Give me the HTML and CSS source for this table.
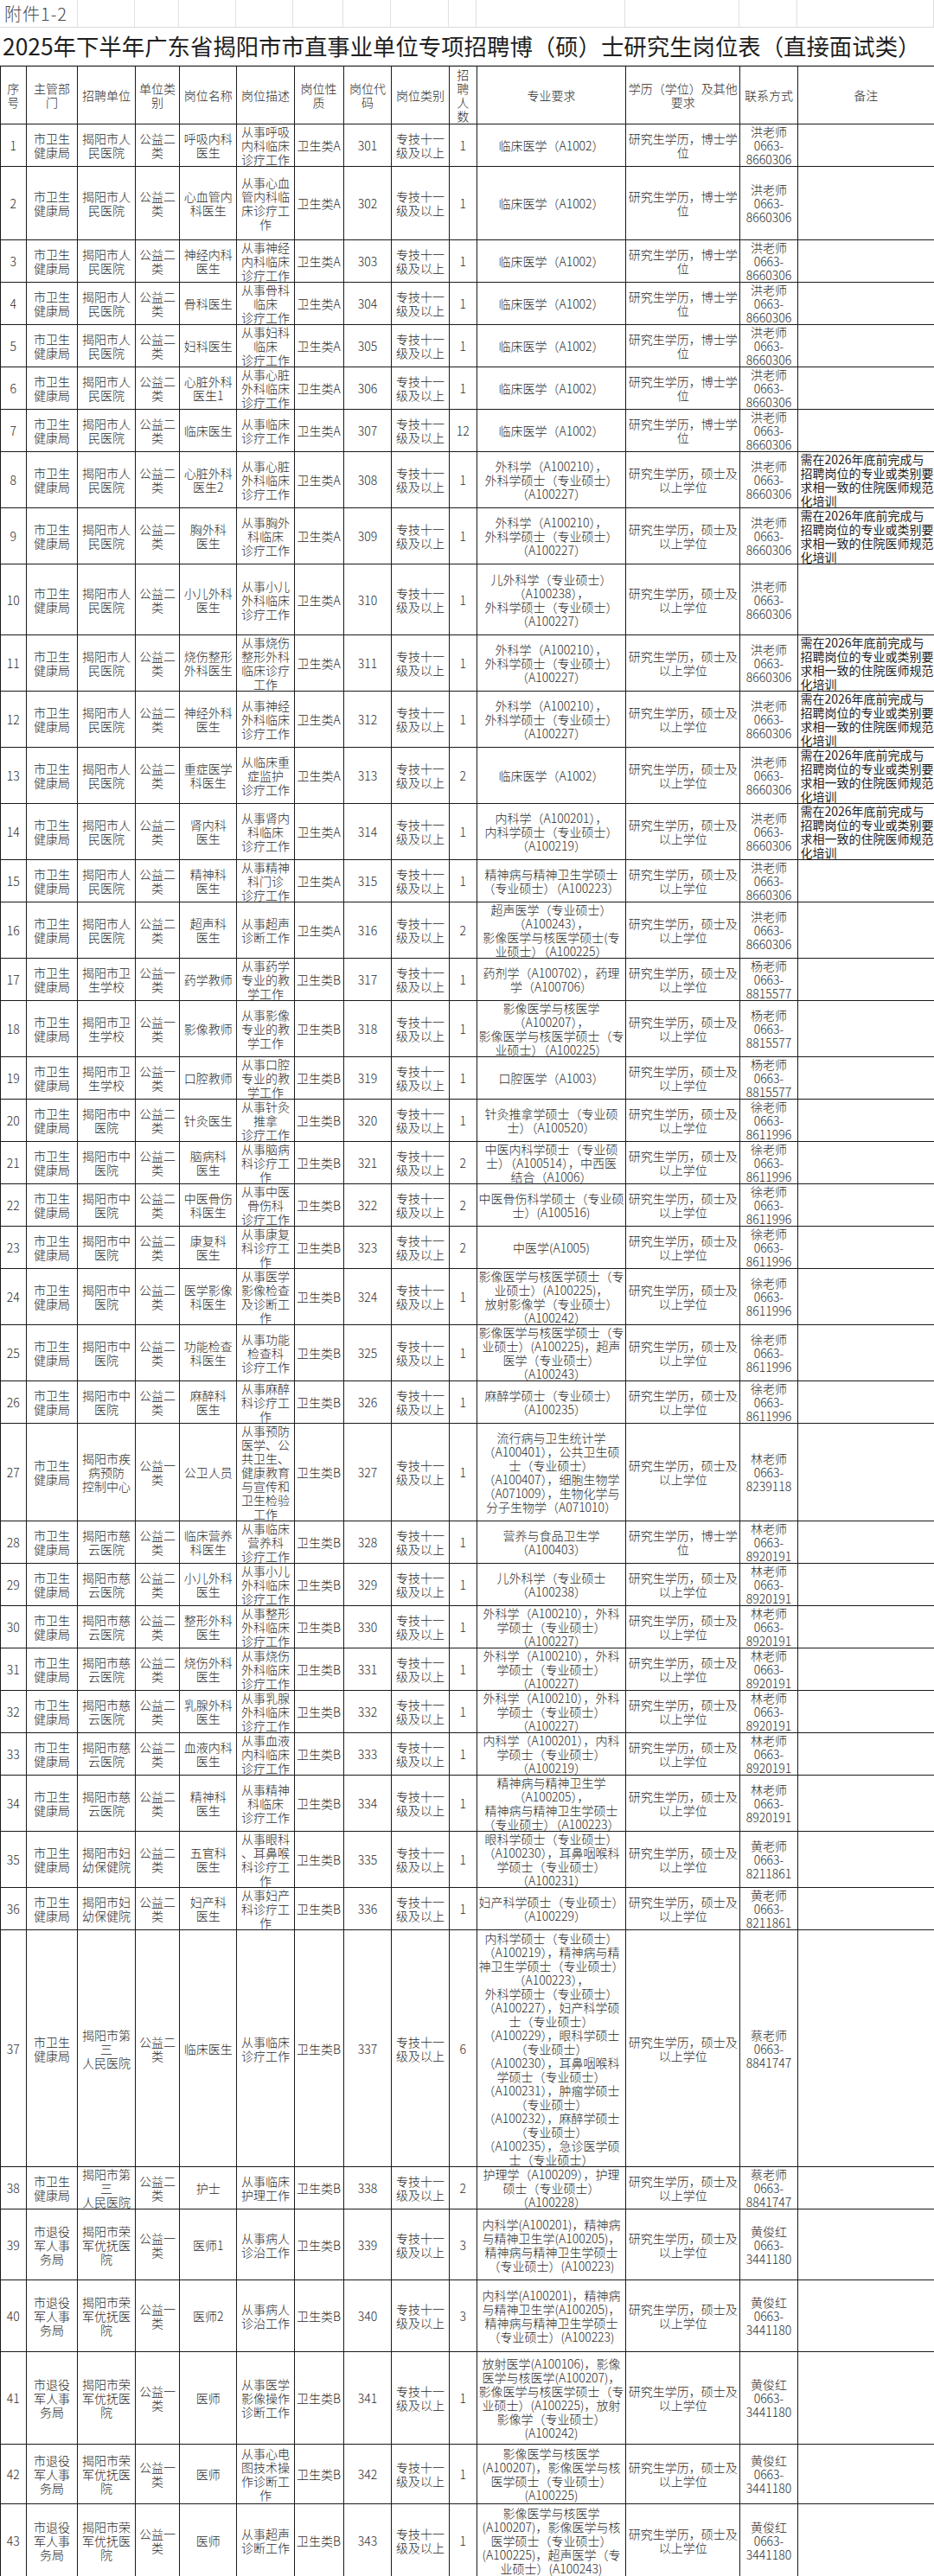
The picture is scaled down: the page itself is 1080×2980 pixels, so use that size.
FILE: index.html
```html
<!DOCTYPE html>
<html lang="zh-CN">
<head>
<meta charset="utf-8">
<title>2025年下半年广东省揭阳市市直事业单位专项招聘博（硕）士研究生岗位表（直接面试类）</title>
<link rel="stylesheet" href="styles.css">
</head>
<body>
<div class="top">
  <div class="annex">附件1-2</div>
  <div></div><div></div><div></div><div></div><div></div><div></div><div></div><div></div><div></div><div></div><div></div><div></div>
</div>
<div class="title">2025年下半年广东省揭阳市市直事业单位专项招聘博（硕）士研究生岗位表（直接面试类）</div>
<table class="jobs">
<colgroup>
<col class="c-no"><col class="c-dept"><col class="c-unit"><col class="c-utype"><col class="c-name"><col class="c-desc"><col class="c-nature"><col class="c-code"><col class="c-cat"><col class="c-num"><col class="c-major"><col class="c-edu"><col class="c-contact"><col class="c-rem">
</colgroup>
<thead>
<tr class="hd">
<th>序<br>号</th><th>主管部<br>门</th><th>招聘单位</th><th>单位类<br>别</th><th>岗位名称</th><th>岗位描述</th><th>岗位性<br>质</th><th>岗位代<br>码</th><th>岗位类别</th><th>招<br>聘<br>人<br>数</th><th>专业要求</th><th>学历（学位）及其他<br>要求</th><th>联系方式</th><th>备注</th>
</tr>
</thead>
<tbody>
<tr class="h49"><td>1</td><td>市卫生<br>健康局</td><td>揭阳市人<br>民医院</td><td>公益二<br>类</td><td>呼吸内科<br>医生</td><td>从事呼吸<br>内科临床<br>诊疗工作</td><td>卫生类A</td><td>301</td><td>专技十一<br>级及以上</td><td>1</td><td>临床医学（A1002）</td><td>研究生学历，博士学<br>位</td><td>洪老师<br>0663-<br>8660306</td><td class="rem"></td></tr>
<tr class="h86"><td>2</td><td>市卫生<br>健康局</td><td>揭阳市人<br>民医院</td><td>公益二<br>类</td><td>心血管内<br>科医生</td><td>从事心血<br>管内科临<br>床诊疗工<br>作</td><td>卫生类A</td><td>302</td><td>专技十一<br>级及以上</td><td>1</td><td>临床医学（A1002）</td><td>研究生学历，博士学<br>位</td><td>洪老师<br>0663-<br>8660306</td><td class="rem"></td></tr>
<tr class="h49"><td>3</td><td>市卫生<br>健康局</td><td>揭阳市人<br>民医院</td><td>公益二<br>类</td><td>神经内科<br>医生</td><td>从事神经<br>内科临床<br>诊疗工作</td><td>卫生类A</td><td>303</td><td>专技十一<br>级及以上</td><td>1</td><td>临床医学（A1002）</td><td>研究生学历，博士学<br>位</td><td>洪老师<br>0663-<br>8660306</td><td class="rem"></td></tr>
<tr class="h49"><td>4</td><td>市卫生<br>健康局</td><td>揭阳市人<br>民医院</td><td>公益二<br>类</td><td>骨科医生</td><td>从事骨科<br>临床<br>诊疗工作</td><td>卫生类A</td><td>304</td><td>专技十一<br>级及以上</td><td>1</td><td>临床医学（A1002）</td><td>研究生学历，博士学<br>位</td><td>洪老师<br>0663-<br>8660306</td><td class="rem"></td></tr>
<tr class="h49"><td>5</td><td>市卫生<br>健康局</td><td>揭阳市人<br>民医院</td><td>公益二<br>类</td><td>妇科医生</td><td>从事妇科<br>临床<br>诊疗工作</td><td>卫生类A</td><td>305</td><td>专技十一<br>级及以上</td><td>1</td><td>临床医学（A1002）</td><td>研究生学历，博士学<br>位</td><td>洪老师<br>0663-<br>8660306</td><td class="rem"></td></tr>
<tr class="h49"><td>6</td><td>市卫生<br>健康局</td><td>揭阳市人<br>民医院</td><td>公益二<br>类</td><td>心脏外科<br>医生1</td><td>从事心脏<br>外科临床<br>诊疗工作</td><td>卫生类A</td><td>306</td><td>专技十一<br>级及以上</td><td>1</td><td>临床医学（A1002）</td><td>研究生学历，博士学<br>位</td><td>洪老师<br>0663-<br>8660306</td><td class="rem"></td></tr>
<tr class="h49"><td>7</td><td>市卫生<br>健康局</td><td>揭阳市人<br>民医院</td><td>公益二<br>类</td><td>临床医生</td><td>从事临床<br>诊疗工作</td><td>卫生类A</td><td>307</td><td>专技十一<br>级及以上</td><td>12</td><td>临床医学（A1002）</td><td>研究生学历，博士学<br>位</td><td>洪老师<br>0663-<br>8660306</td><td class="rem"></td></tr>
<tr class="h65"><td>8</td><td>市卫生<br>健康局</td><td>揭阳市人<br>民医院</td><td>公益二<br>类</td><td>心脏外科<br>医生2</td><td>从事心脏<br>外科临床<br>诊疗工作</td><td>卫生类A</td><td>308</td><td>专技十一<br>级及以上</td><td>1</td><td>外科学（A100210），<br>外科学硕士（专业硕士）<br>（A100227）</td><td>研究生学历，硕士及<br>以上学位</td><td>洪老师<br>0663-<br>8660306</td><td class="rem">需在2026年底前完成与<br>招聘岗位的专业或类别要<br>求相一致的住院医师规范<br>化培训</td></tr>
<tr class="h65"><td>9</td><td>市卫生<br>健康局</td><td>揭阳市人<br>民医院</td><td>公益二<br>类</td><td>胸外科<br>医生</td><td>从事胸外<br>科临床<br>诊疗工作</td><td>卫生类A</td><td>309</td><td>专技十一<br>级及以上</td><td>1</td><td>外科学（A100210），<br>外科学硕士（专业硕士）<br>（A100227）</td><td>研究生学历，硕士及<br>以上学位</td><td>洪老师<br>0663-<br>8660306</td><td class="rem">需在2026年底前完成与<br>招聘岗位的专业或类别要<br>求相一致的住院医师规范<br>化培训</td></tr>
<tr class="h82"><td>10</td><td>市卫生<br>健康局</td><td>揭阳市人<br>民医院</td><td>公益二<br>类</td><td>小儿外科<br>医生</td><td>从事小儿<br>外科临床<br>诊疗工作</td><td>卫生类A</td><td>310</td><td>专技十一<br>级及以上</td><td>1</td><td>儿外科学（专业硕士）<br>（A100238），<br>外科学硕士（专业硕士）<br>（A100227）</td><td>研究生学历，硕士及<br>以上学位</td><td>洪老师<br>0663-<br>8660306</td><td class="rem"></td></tr>
<tr class="h65"><td>11</td><td>市卫生<br>健康局</td><td>揭阳市人<br>民医院</td><td>公益二<br>类</td><td>烧伤整形<br>外科医生</td><td>从事烧伤<br>整形外科<br>临床诊疗<br>工作</td><td>卫生类A</td><td>311</td><td>专技十一<br>级及以上</td><td>1</td><td>外科学（A100210），<br>外科学硕士（专业硕士）<br>（A100227）</td><td>研究生学历，硕士及<br>以上学位</td><td>洪老师<br>0663-<br>8660306</td><td class="rem">需在2026年底前完成与<br>招聘岗位的专业或类别要<br>求相一致的住院医师规范<br>化培训</td></tr>
<tr class="h65"><td>12</td><td>市卫生<br>健康局</td><td>揭阳市人<br>民医院</td><td>公益二<br>类</td><td>神经外科<br>医生</td><td>从事神经<br>外科临床<br>诊疗工作</td><td>卫生类A</td><td>312</td><td>专技十一<br>级及以上</td><td>1</td><td>外科学（A100210），<br>外科学硕士（专业硕士）<br>（A100227）</td><td>研究生学历，硕士及<br>以上学位</td><td>洪老师<br>0663-<br>8660306</td><td class="rem">需在2026年底前完成与<br>招聘岗位的专业或类别要<br>求相一致的住院医师规范<br>化培训</td></tr>
<tr class="h65"><td>13</td><td>市卫生<br>健康局</td><td>揭阳市人<br>民医院</td><td>公益二<br>类</td><td>重症医学<br>科医生</td><td>从临床重<br>症监护<br>诊疗工作</td><td>卫生类A</td><td>313</td><td>专技十一<br>级及以上</td><td>2</td><td>临床医学（A1002）</td><td>研究生学历，硕士及<br>以上学位</td><td>洪老师<br>0663-<br>8660306</td><td class="rem">需在2026年底前完成与<br>招聘岗位的专业或类别要<br>求相一致的住院医师规范<br>化培训</td></tr>
<tr class="h65"><td>14</td><td>市卫生<br>健康局</td><td>揭阳市人<br>民医院</td><td>公益二<br>类</td><td>肾内科<br>医生</td><td>从事肾内<br>科临床<br>诊疗工作</td><td>卫生类A</td><td>314</td><td>专技十一<br>级及以上</td><td>1</td><td>内科学（A100201），<br>内科学硕士（专业硕士）<br>（A100219）</td><td>研究生学历，硕士及<br>以上学位</td><td>洪老师<br>0663-<br>8660306</td><td class="rem">需在2026年底前完成与<br>招聘岗位的专业或类别要<br>求相一致的住院医师规范<br>化培训</td></tr>
<tr class="h49"><td>15</td><td>市卫生<br>健康局</td><td>揭阳市人<br>民医院</td><td>公益二<br>类</td><td>精神科<br>医生</td><td>从事精神<br>科门诊<br>诊疗工作</td><td>卫生类A</td><td>315</td><td>专技十一<br>级及以上</td><td>1</td><td>精神病与精神卫生学硕士<br>（专业硕士）（A100223）</td><td>研究生学历，硕士及<br>以上学位</td><td>洪老师<br>0663-<br>8660306</td><td class="rem"></td></tr>
<tr class="h65"><td>16</td><td>市卫生<br>健康局</td><td>揭阳市人<br>民医院</td><td>公益二<br>类</td><td>超声科<br>医生</td><td>从事超声<br>诊断工作</td><td>卫生类A</td><td>316</td><td>专技十一<br>级及以上</td><td>2</td><td>超声医学（专业硕士）<br>（A100243），<br>影像医学与核医学硕士(专<br>业硕士）（A100225）</td><td>研究生学历，硕士及<br>以上学位</td><td>洪老师<br>0663-<br>8660306</td><td class="rem"></td></tr>
<tr class="h49"><td>17</td><td>市卫生<br>健康局</td><td>揭阳市卫<br>生学校</td><td>公益一<br>类</td><td>药学教师</td><td>从事药学<br>专业的教<br>学工作</td><td>卫生类B</td><td>317</td><td>专技十一<br>级及以上</td><td>1</td><td>药剂学（A100702），药理<br>学（A100706）</td><td>研究生学历，硕士及<br>以上学位</td><td>杨老师<br>0663-<br>8815577</td><td class="rem"></td></tr>
<tr class="h65"><td>18</td><td>市卫生<br>健康局</td><td>揭阳市卫<br>生学校</td><td>公益一<br>类</td><td>影像教师</td><td>从事影像<br>专业的教<br>学工作</td><td>卫生类B</td><td>318</td><td>专技十一<br>级及以上</td><td>1</td><td>影像医学与核医学<br>（A100207），<br>影像医学与核医学硕士（专<br>业硕士）（A100225）</td><td>研究生学历，硕士及<br>以上学位</td><td>杨老师<br>0663-<br>8815577</td><td class="rem"></td></tr>
<tr class="h49"><td>19</td><td>市卫生<br>健康局</td><td>揭阳市卫<br>生学校</td><td>公益一<br>类</td><td>口腔教师</td><td>从事口腔<br>专业的教<br>学工作</td><td>卫生类B</td><td>319</td><td>专技十一<br>级及以上</td><td>1</td><td>口腔医学（A1003）</td><td>研究生学历，硕士及<br>以上学位</td><td>杨老师<br>0663-<br>8815577</td><td class="rem"></td></tr>
<tr class="h49"><td>20</td><td>市卫生<br>健康局</td><td>揭阳市中<br>医院</td><td>公益二<br>类</td><td>针灸医生</td><td>从事针灸<br>推拿<br>诊疗工作</td><td>卫生类B</td><td>320</td><td>专技十一<br>级及以上</td><td>1</td><td>针灸推拿学硕士（专业硕<br>士）（A100520）</td><td>研究生学历，硕士及<br>以上学位</td><td>徐老师<br>0663-<br>8611996</td><td class="rem"></td></tr>
<tr class="h49"><td>21</td><td>市卫生<br>健康局</td><td>揭阳市中<br>医院</td><td>公益二<br>类</td><td>脑病科<br>医生</td><td>从事脑病<br>科诊疗工<br>作</td><td>卫生类B</td><td>321</td><td>专技十一<br>级及以上</td><td>2</td><td>中医内科学硕士（专业硕<br>士）（A100514），中西医<br>结合（A1006）</td><td>研究生学历，硕士及<br>以上学位</td><td>徐老师<br>0663-<br>8611996</td><td class="rem"></td></tr>
<tr class="h49"><td>22</td><td>市卫生<br>健康局</td><td>揭阳市中<br>医院</td><td>公益二<br>类</td><td>中医骨伤<br>科医生</td><td>从事中医<br>骨伤科<br>诊疗工作</td><td>卫生类B</td><td>322</td><td>专技十一<br>级及以上</td><td>2</td><td>中医骨伤科学硕士（专业硕<br>士）(A100516)</td><td>研究生学历，硕士及<br>以上学位</td><td>徐老师<br>0663-<br>8611996</td><td class="rem"></td></tr>
<tr class="h49"><td>23</td><td>市卫生<br>健康局</td><td>揭阳市中<br>医院</td><td>公益二<br>类</td><td>康复科<br>医生</td><td>从事康复<br>科诊疗工<br>作</td><td>卫生类B</td><td>323</td><td>专技十一<br>级及以上</td><td>2</td><td>中医学(A1005)</td><td>研究生学历，硕士及<br>以上学位</td><td>徐老师<br>0663-<br>8611996</td><td class="rem"></td></tr>
<tr class="h65"><td>24</td><td>市卫生<br>健康局</td><td>揭阳市中<br>医院</td><td>公益二<br>类</td><td>医学影像<br>科医生</td><td>从事医学<br>影像检查<br>及诊断工<br>作</td><td>卫生类B</td><td>324</td><td>专技十一<br>级及以上</td><td>1</td><td>影像医学与核医学硕士（专<br>业硕士）(A100225)，<br>放射影像学（专业硕士）<br>（A100242）</td><td>研究生学历，硕士及<br>以上学位</td><td>徐老师<br>0663-<br>8611996</td><td class="rem"></td></tr>
<tr class="h65"><td>25</td><td>市卫生<br>健康局</td><td>揭阳市中<br>医院</td><td>公益二<br>类</td><td>功能检查<br>科医生</td><td>从事功能<br>检查科<br>诊疗工作</td><td>卫生类B</td><td>325</td><td>专技十一<br>级及以上</td><td>1</td><td>影像医学与核医学硕士（专<br>业硕士）(A100225)，超声<br>医学（专业硕士）<br>（A100243）</td><td>研究生学历，硕士及<br>以上学位</td><td>徐老师<br>0663-<br>8611996</td><td class="rem"></td></tr>
<tr class="h49"><td>26</td><td>市卫生<br>健康局</td><td>揭阳市中<br>医院</td><td>公益二<br>类</td><td>麻醉科<br>医生</td><td>从事麻醉<br>科诊疗工<br>作</td><td>卫生类B</td><td>326</td><td>专技十一<br>级及以上</td><td>1</td><td>麻醉学硕士（专业硕士）<br>（A100235）</td><td>研究生学历，硕士及<br>以上学位</td><td>徐老师<br>0663-<br>8611996</td><td class="rem"></td></tr>
<tr class="h113"><td>27</td><td>市卫生<br>健康局</td><td>揭阳市疾<br>病预防<br>控制中心</td><td>公益一<br>类</td><td>公卫人员</td><td>从事预防<br>医学、公<br>共卫生、<br>健康教育<br>与宣传和<br>卫生检验<br>工作</td><td>卫生类B</td><td>327</td><td>专技十一<br>级及以上</td><td>1</td><td>流行病与卫生统计学<br>（A100401），公共卫生硕<br>士（专业硕士）<br>（A100407），细胞生物学<br>（A071009），生物化学与<br>分子生物学（A071010）</td><td>研究生学历，硕士及<br>以上学位</td><td>林老师<br>0663-<br>8239118</td><td class="rem"></td></tr>
<tr class="h49"><td>28</td><td>市卫生<br>健康局</td><td>揭阳市慈<br>云医院</td><td>公益二<br>类</td><td>临床营养<br>科医生</td><td>从事临床<br>营养科<br>诊疗工作</td><td>卫生类B</td><td>328</td><td>专技十一<br>级及以上</td><td>1</td><td>营养与食品卫生学<br>（A100403）</td><td>研究生学历，博士学<br>位</td><td>林老师<br>0663-<br>8920191</td><td class="rem"></td></tr>
<tr class="h49"><td>29</td><td>市卫生<br>健康局</td><td>揭阳市慈<br>云医院</td><td>公益二<br>类</td><td>小儿外科<br>医生</td><td>从事小儿<br>外科临床<br>诊疗工作</td><td>卫生类B</td><td>329</td><td>专技十一<br>级及以上</td><td>1</td><td>儿外科学（专业硕士<br>（A100238）</td><td>研究生学历，硕士及<br>以上学位</td><td>林老师<br>0663-<br>8920191</td><td class="rem"></td></tr>
<tr class="h49"><td>30</td><td>市卫生<br>健康局</td><td>揭阳市慈<br>云医院</td><td>公益二<br>类</td><td>整形外科<br>医生</td><td>从事整形<br>外科临床<br>诊疗工作</td><td>卫生类B</td><td>330</td><td>专技十一<br>级及以上</td><td>1</td><td>外科学（A100210），外科<br>学硕士（专业硕士）<br>（A100227）</td><td>研究生学历，硕士及<br>以上学位</td><td>林老师<br>0663-<br>8920191</td><td class="rem"></td></tr>
<tr class="h49"><td>31</td><td>市卫生<br>健康局</td><td>揭阳市慈<br>云医院</td><td>公益二<br>类</td><td>烧伤外科<br>医生</td><td>从事烧伤<br>外科临床<br>诊疗工作</td><td>卫生类B</td><td>331</td><td>专技十一<br>级及以上</td><td>1</td><td>外科学（A100210），外科<br>学硕士（专业硕士）<br>（A100227）</td><td>研究生学历，硕士及<br>以上学位</td><td>林老师<br>0663-<br>8920191</td><td class="rem"></td></tr>
<tr class="h49"><td>32</td><td>市卫生<br>健康局</td><td>揭阳市慈<br>云医院</td><td>公益二<br>类</td><td>乳腺外科<br>医生</td><td>从事乳腺<br>外科临床<br>诊疗工作</td><td>卫生类B</td><td>332</td><td>专技十一<br>级及以上</td><td>1</td><td>外科学（A100210），外科<br>学硕士（专业硕士）<br>（A100227）</td><td>研究生学历，硕士及<br>以上学位</td><td>林老师<br>0663-<br>8920191</td><td class="rem"></td></tr>
<tr class="h49"><td>33</td><td>市卫生<br>健康局</td><td>揭阳市慈<br>云医院</td><td>公益二<br>类</td><td>血液内科<br>医生</td><td>从事血液<br>内科临床<br>诊疗工作</td><td>卫生类B</td><td>333</td><td>专技十一<br>级及以上</td><td>1</td><td>内科学（A100201），内科<br>学硕士（专业硕士）<br>（A100219）</td><td>研究生学历，硕士及<br>以上学位</td><td>林老师<br>0663-<br>8920191</td><td class="rem"></td></tr>
<tr class="h65"><td>34</td><td>市卫生<br>健康局</td><td>揭阳市慈<br>云医院</td><td>公益二<br>类</td><td>精神科<br>医生</td><td>从事精神<br>科临床<br>诊疗工作</td><td>卫生类B</td><td>334</td><td>专技十一<br>级及以上</td><td>1</td><td>精神病与精神卫生学<br>（A100205），<br>精神病与精神卫生学硕士<br>（专业硕士）（A100223）</td><td>研究生学历，硕士及<br>以上学位</td><td>林老师<br>0663-<br>8920191</td><td class="rem"></td></tr>
<tr class="h65"><td>35</td><td>市卫生<br>健康局</td><td>揭阳市妇<br>幼保健院</td><td>公益二<br>类</td><td>五官科<br>医生</td><td>从事眼科<br>、耳鼻喉<br>科诊疗工<br>作</td><td>卫生类B</td><td>335</td><td>专技十一<br>级及以上</td><td>1</td><td>眼科学硕士（专业硕士）<br>（A100230），耳鼻咽喉科<br>学硕士（专业硕士）<br>（A100231）</td><td>研究生学历，硕士及<br>以上学位</td><td>黄老师<br>0663-<br>8211861</td><td class="rem"></td></tr>
<tr class="h49"><td>36</td><td>市卫生<br>健康局</td><td>揭阳市妇<br>幼保健院</td><td>公益二<br>类</td><td>妇产科<br>医生</td><td>从事妇产<br>科诊疗工<br>作</td><td>卫生类B</td><td>336</td><td>专技十一<br>级及以上</td><td>1</td><td>妇产科学硕士（专业硕士）<br>（A100229）</td><td>研究生学历，硕士及<br>以上学位</td><td>黄老师<br>0663-<br>8211861</td><td class="rem"></td></tr>
<tr class="h274"><td>37</td><td>市卫生<br>健康局</td><td>揭阳市第<br>三<br>人民医院</td><td>公益二<br>类</td><td>临床医生</td><td>从事临床<br>诊疗工作</td><td>卫生类B</td><td>337</td><td>专技十一<br>级及以上</td><td>6</td><td>内科学硕士（专业硕士）<br>（A100219），精神病与精<br>神卫生学硕士（专业硕士）<br>（A100223），<br>外科学硕士（专业硕士）<br>（A100227），妇产科学硕<br>士（专业硕士）<br>（A100229），眼科学硕士<br>（专业硕士）<br>（A100230），耳鼻咽喉科<br>学硕士（专业硕士）<br>（A100231），肿瘤学硕士<br>（专业硕士）<br>（A100232），麻醉学硕士<br>（专业硕士）<br>（A100235），急诊医学硕<br>士（专业硕士）</td><td>研究生学历，硕士及<br>以上学位</td><td>蔡老师<br>0663-<br>8841747</td><td class="rem"></td></tr>
<tr class="h49"><td>38</td><td>市卫生<br>健康局</td><td>揭阳市第<br>三<br>人民医院</td><td>公益二<br>类</td><td>护士</td><td>从事临床<br>护理工作</td><td>卫生类B</td><td>338</td><td>专技十一<br>级及以上</td><td>2</td><td>护理学（A100209），护理<br>硕士（专业硕士）<br>（A100228）</td><td>研究生学历，硕士及<br>以上学位</td><td>蔡老师<br>0663-<br>8841747</td><td class="rem"></td></tr>
<tr class="h82"><td>39</td><td>市退役<br>军人事<br>务局</td><td>揭阳市荣<br>军优抚医<br>院</td><td>公益一<br>类</td><td>医师1</td><td>从事病人<br>诊治工作</td><td>卫生类B</td><td>339</td><td>专技十一<br>级及以上</td><td>3</td><td>内科学(A100201)，精神病<br>与精神卫生学(A100205)，<br>精神病与精神卫生学硕士<br>（专业硕士）(A100223)</td><td>研究生学历，硕士及<br>以上学位</td><td>黄俊红<br>0663-<br>3441180</td><td class="rem"></td></tr>
<tr class="h83"><td>40</td><td>市退役<br>军人事<br>务局</td><td>揭阳市荣<br>军优抚医<br>院</td><td>公益一<br>类</td><td>医师2</td><td>从事病人<br>诊治工作</td><td>卫生类B</td><td>340</td><td>专技十一<br>级及以上</td><td>3</td><td>内科学(A100201)，精神病<br>与精神卫生学(A100205)，<br>精神病与精神卫生学硕士<br>（专业硕士）(A100223)</td><td>研究生学历，硕士及<br>以上学位</td><td>黄俊红<br>0663-<br>3441180</td><td class="rem"></td></tr>
<tr class="h107"><td>41</td><td>市退役<br>军人事<br>务局</td><td>揭阳市荣<br>军优抚医<br>院</td><td>公益一<br>类</td><td>医师</td><td>从事医学<br>影像操作<br>诊断工作</td><td>卫生类B</td><td>341</td><td>专技十一<br>级及以上</td><td>1</td><td>放射医学(A100106)，影像<br>医学与核医学(A100207)，<br>影像医学与核医学硕士（专<br>业硕士）(A100225)，放射<br>影像学（专业硕士）<br>(A100242)</td><td>研究生学历，硕士及<br>以上学位</td><td>黄俊红<br>0663-<br>3441180</td><td class="rem"></td></tr>
<tr class="h69"><td>42</td><td>市退役<br>军人事<br>务局</td><td>揭阳市荣<br>军优抚医<br>院</td><td>公益一<br>类</td><td>医师</td><td>从事心电<br>图技术操<br>作诊断工<br>作</td><td>卫生类B</td><td>342</td><td>专技十一<br>级及以上</td><td>1</td><td>影像医学与核医学<br>(A100207)，影像医学与核<br>医学硕士（专业硕士）<br>(A100225)</td><td>研究生学历，硕士及<br>以上学位</td><td>黄俊红<br>0663-<br>3441180</td><td class="rem"></td></tr>
<tr class="h86"><td>43</td><td>市退役<br>军人事<br>务局</td><td>揭阳市荣<br>军优抚医<br>院</td><td>公益一<br>类</td><td>医师</td><td>从事超声<br>诊断工作</td><td>卫生类B</td><td>343</td><td>专技十一<br>级及以上</td><td>1</td><td>影像医学与核医学<br>(A100207)，影像医学与核<br>医学硕士（专业硕士）<br>(A100225)，超声医学（专<br>业硕士）(A100243)</td><td>研究生学历，硕士及<br>以上学位</td><td>黄俊红<br>0663-<br>3441180</td><td class="rem"></td></tr>
</tbody>
</table>
</body>
</html>
```

FILE: styles.css
```css
* {
  box-sizing: border-box;
}

html, body {
  margin: 0;
  padding: 0;
  background: #ffffff;
}

body {
  width: 1080px;
  font-family: "Noto Sans CJK SC", "Noto Sans", sans-serif;
  color: #2a2a2a;
}

/* spreadsheet strip above the table */
.top {
  display: grid;
  grid-template-columns: 89.5px 66.1px 51.7px 66.1px 66.1px 57.2px 55.8px 66.1px 32.4px 172.2px 132.3px 66.1px 158.4px;
  height: 32px;
  border-bottom: 1px solid #dcdcdc;
}

.top > div {
  border-right: 1px solid #e0e0e0;
}

.annex {
  font-size: 20px;
  line-height: 31px;
  padding-left: 5px;
  color: #4a4a4a;
  letter-spacing: 1px;
  white-space: nowrap;
  font-weight: 300;
}

.title {
  height: 44px;
  border-bottom: 1px solid #dcdcdc;
  font-size: 26.4px;
  line-height: 42px;
  padding-left: 3px;
  white-space: nowrap;
  color: #1f1f1f;
  font-weight: 400;
}

/* main table */
.jobs {
  border-collapse: collapse;
  table-layout: fixed;
  width: 1080px;
}

.c-no { width: 29.6px; }
.c-dept { width: 59.9px; }
.c-unit { width: 66.2px; }
.c-utype { width: 51.6px; }
.c-name { width: 66.1px; }
.c-desc { width: 66.2px; }
.c-nature { width: 57.1px; }
.c-code { width: 55.8px; }
.c-cat { width: 66.2px; }
.c-num { width: 32.3px; }
.c-major { width: 172.2px; }
.c-edu { width: 132.3px; }
.c-contact { width: 66.1px; }
.c-rem { width: 158.4px; }

.jobs th,
.jobs td {
  border: 1px solid #1a1a1a;
  padding: 0 1px;
  text-align: center;
  vertical-align: middle;
  font-size: 14px;
  line-height: 16px;
  font-weight: 300;
  white-space: nowrap;
  overflow: hidden;
  color: #2a2a2a;
}

.jobs td.rem {
  text-align: left;
  padding-left: 3px;
  padding-right: 0;
  color: #1f1f1f;
  font-weight: 400;
}

.jobs tr.hd { height: 66.7px; }
.jobs tr.h49 { height: 48.8px; }
.jobs tr.h65 { height: 64.8px; }
.jobs tr.h69 { height: 69px; }
.jobs tr.h82 { height: 82px; }
.jobs tr.h83 { height: 83.3px; }
.jobs tr.h86 { height: 85.5px; }
.jobs tr.h107 { height: 106.7px; }
.jobs tr.h113 { height: 113.3px; }
.jobs tr.h274 { height: 273.6px; }
```
